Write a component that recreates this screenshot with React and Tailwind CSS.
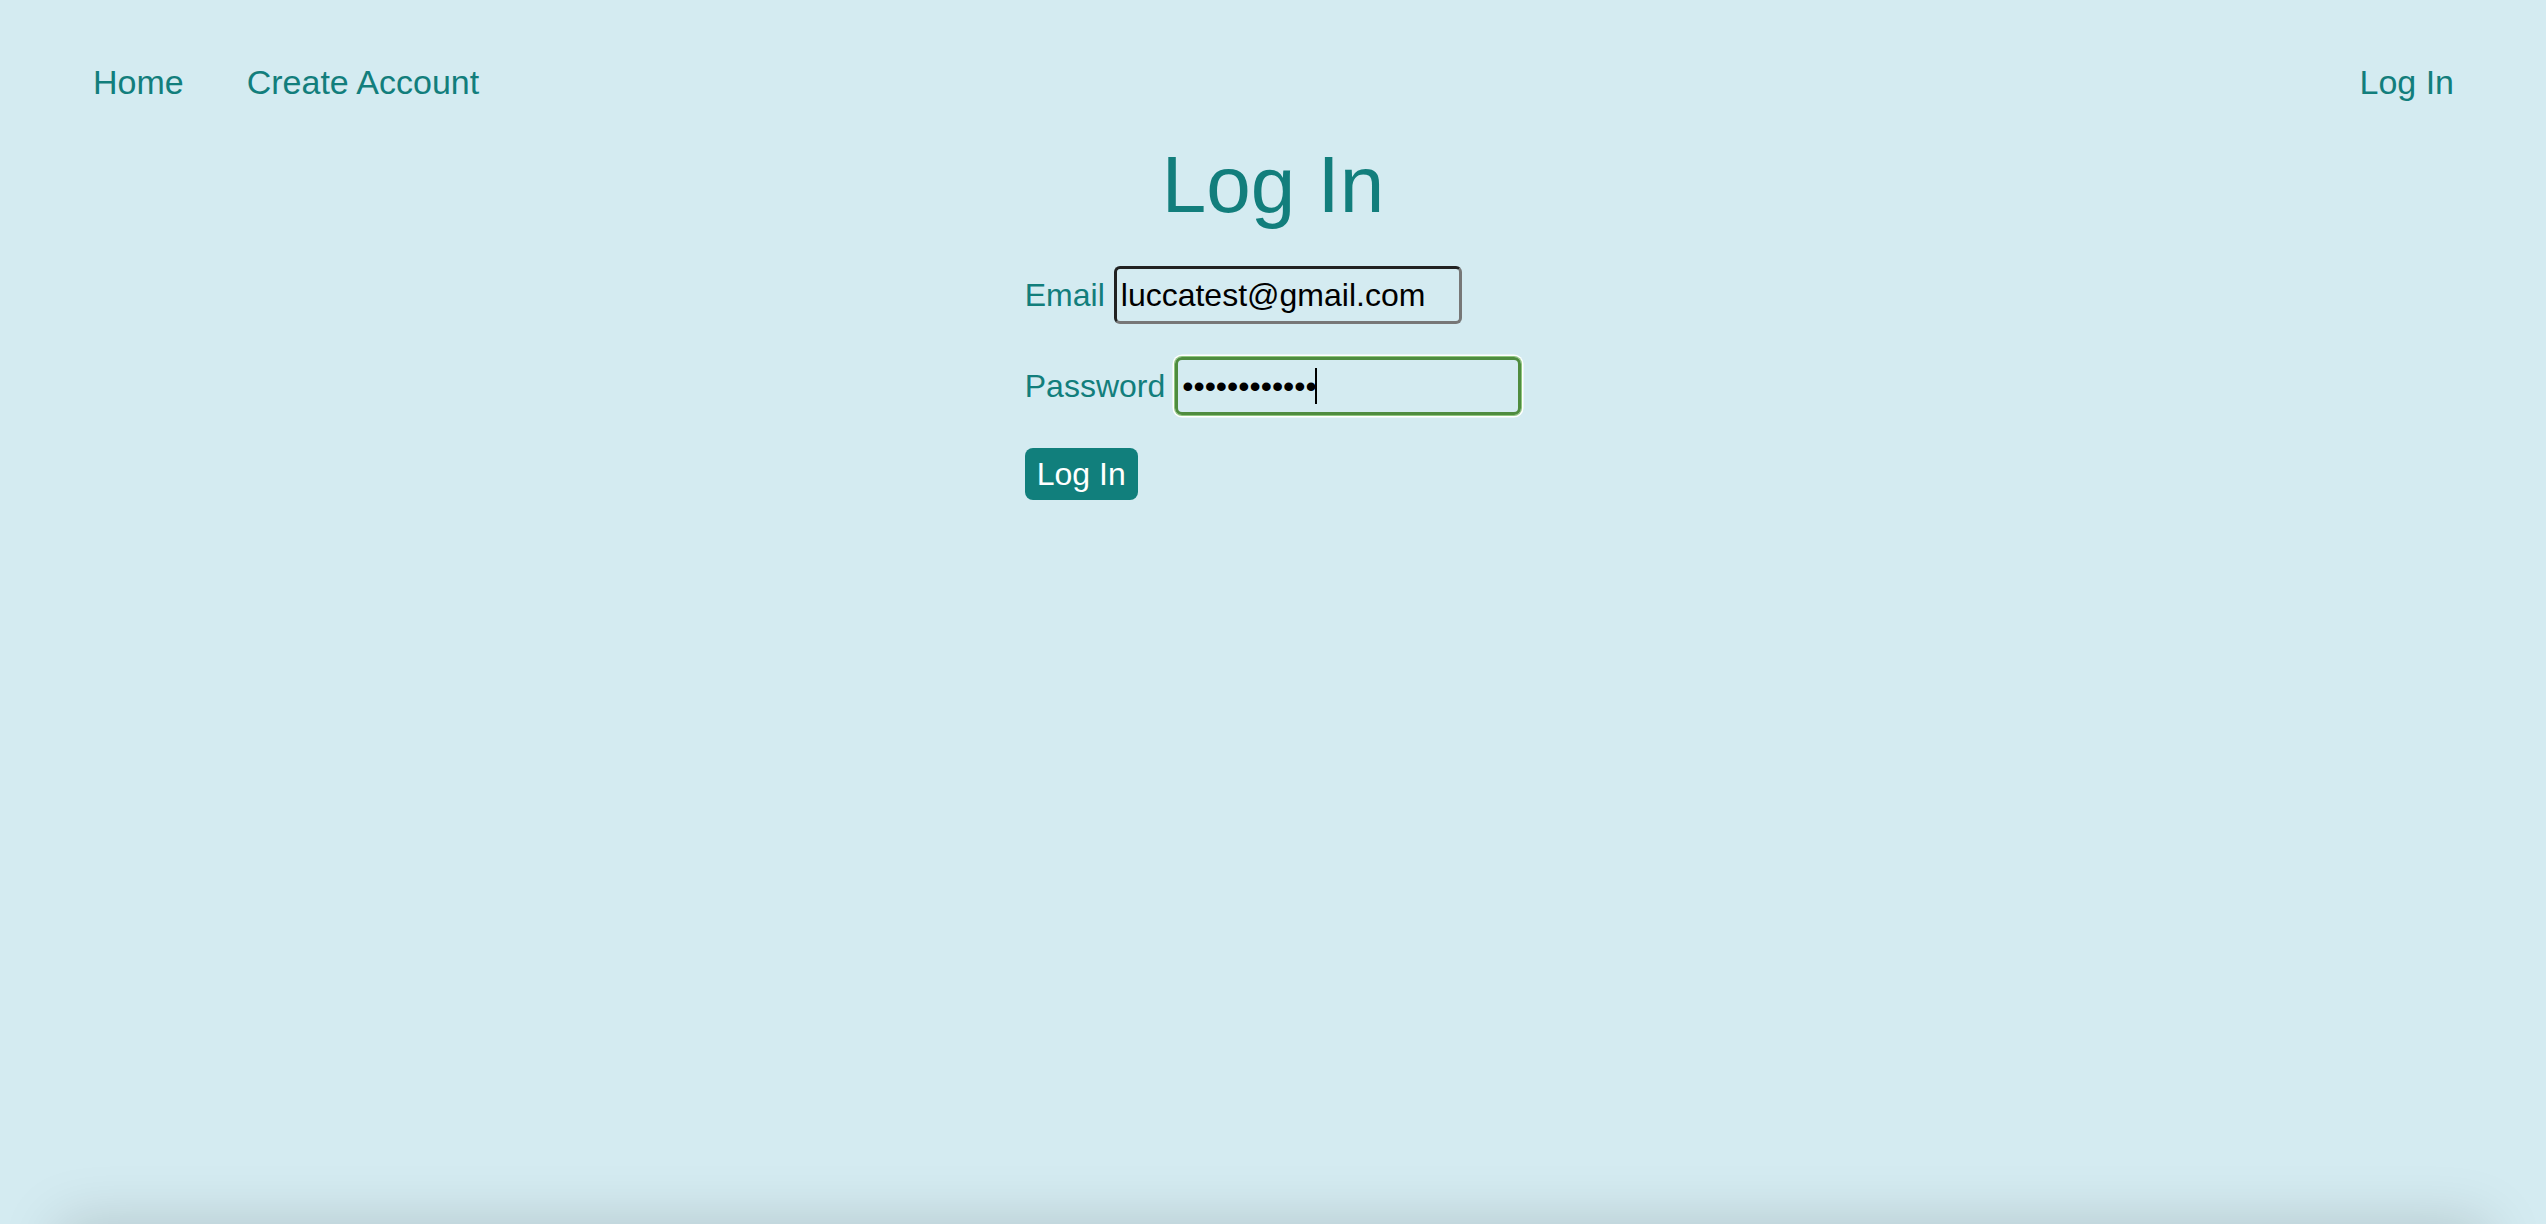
const FONT = "font-['Liberation_Sans',Arial,sans-serif]"

function NavBar() {
  return (
    <nav className="flex items-start justify-between pl-[93px] pr-[92px] pt-[63px] text-[34px] leading-[39px] text-[#127e7c]">
      <div className="flex gap-[63px]">
        <a href="#" className="block">Home</a>
        <a href="#" className="block">Create Account</a>
      </div>
      <a href="#" className="block">Log In</a>
    </nav>
  )
}

function LoginForm() {
  return (
    <form
      onSubmit={(e) => e.preventDefault()}
      className="mt-[35px] flex w-fit flex-col items-start gap-[33px] text-[32px] leading-[37px]"
    >
      <div className="flex items-baseline gap-[9px]">
        <label htmlFor="email" className="text-[#127e7c]">Email</label>
        <input
          id="email"
          type="email"
          defaultValue="luccatest@gmail.com"
          className="h-[58px] w-[348px] rounded-[6px] border-[3px] border-t-[#222] border-l-[#222] border-b-[#777] border-r-[#777] bg-transparent px-[4px] text-[32px] text-black outline-none"
        />
      </div>

      <div className="flex items-baseline gap-[10px]">
        <label htmlFor="password" className="text-[#127e7c]">Password</label>
        <div className="relative">
          <input
            id="password"
            type="password"
            defaultValue="password1234"
            className="h-[58px] w-[346px] rounded-[7px] border-[3px] border-[#4f8c3f] bg-transparent px-[4px] text-[32px] text-black outline-none shadow-[0_0_0_1px_#8fc67e,0_0_0_2.5px_#ffffff]"
          />
          {/* text caret */}
          <span className="pointer-events-none absolute left-[140px] top-[11px] h-[36px] w-[2px] bg-black" />
        </div>
      </div>

      <button
        type="submit"
        className="h-[52px] rounded-[8px] bg-[#117f7c] px-[12px] text-[32px] leading-[37px] text-white"
      >
        Log In
      </button>
    </form>
  )
}

export default function App() {
  return (
    <div className={`flex h-screen flex-col overflow-hidden bg-[#d4ebf1] ${FONT}`}>
      <div className="h-screen flex-none">
        <NavBar />
        <main className="flex flex-col items-center">
          <h1 className="mt-[37px] text-[80px] leading-[92px] font-normal text-[#127e7c]">Log In</h1>
          <LoginForm />
        </main>
      </div>
      {/* footer sits just below the fold; only its shadow shows */}
      <footer className="mx-[60px] h-16 flex-none bg-[#d4ebf1] shadow-[0_0_60px_rgba(0,0,0,0.17)]" />
    </div>
  )
}
